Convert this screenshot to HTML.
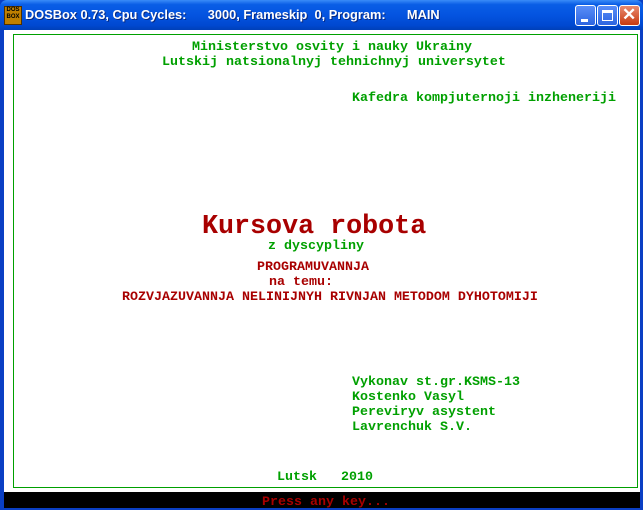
<!DOCTYPE html>
<html><head><style>
*{margin:0;padding:0}
body{width:643px;height:510px;overflow:hidden;background:#0a3fc4;position:relative;font-family:"Liberation Mono",monospace}
#tb{position:absolute;left:0;top:0;width:643px;height:30px;background:linear-gradient(#3a8cf8 0%,#0a5ee6 15%,#0454e0 50%,#0048d0 85%,#0040b8 100%);border-radius:7px 7px 0 0}
#ttl{position:absolute;left:25px;top:7px;color:#fff;font-family:"Liberation Sans",sans-serif;font-size:12.8px;font-weight:bold;text-shadow:1px 1px #0a2a80;white-space:pre}
#ico{position:absolute;left:4px;top:6px;width:16px;height:17px;background:#c08000;border:1px solid #503000;color:#000;font:bold 6px/7px "Liberation Sans";text-align:center}
.btn{position:absolute;top:5px;width:21px;height:21px;border:1px solid #fff;border-radius:3px;background:linear-gradient(#5a8ef8,#2c64e0);box-sizing:border-box}
#cl{background:linear-gradient(#e88a70,#c83a10)}
#client{position:absolute;left:4px;top:30px;width:636px;height:462px;background:#fff}
#frame{position:absolute;left:13px;top:34px;width:623px;height:452px;border:1px solid #00a000}
#bar{position:absolute;left:4px;top:492px;width:636px;height:16px;background:#000}
.t{position:absolute;font-size:13.33px;font-weight:bold;line-height:14px;white-space:pre;color:#00a000}
.r{color:#a80000}
</style></head><body>
<div id="tb">
<div id="ico">DOS<br>BOX</div>
<div id="ttl">DOSBox 0.73, Cpu Cycles:      3000, Frameskip  0, Program:      MAIN</div>
<div class="btn" style="left:575px"><div style="position:absolute;left:5px;top:13px;width:7px;height:3px;background:#fff"></div></div>
<div class="btn" style="left:597px"><div style="position:absolute;left:4px;top:4px;width:11px;height:11px;border:1px solid #fff;border-top-width:3px;box-sizing:border-box"></div></div>
<div class="btn" id="cl" style="left:619px"><div style="position:absolute;left:2px;top:-1px;color:#fff;font:bold 17px 'Liberation Sans'">✕</div></div>
</div>
<div id="client"></div>
<div id="frame"></div>
<div id="bar"></div>
<div class="t" style="left:192px;top:41px">Ministerstvo osvity i nauky Ukrainy</div>
<div class="t" style="left:162px;top:56px">Lutskij natsionalnyj tehnichnyj universytet</div>
<div class="t" style="left:352px;top:92px">Kafedra kompjuternoji inzheneriji</div>
<div class="t r" style="left:202px;top:213px;font-size:26.7px;line-height:28px">Kursova robota</div>
<div class="t" style="left:268px;top:240px">z dyscypliny</div>
<div class="t r" style="left:257px;top:261px">PROGRAMUVANNJA</div>
<div class="t r" style="left:269px;top:276px">na temu:</div>
<div class="t r" style="left:122px;top:291px">ROZVJAZUVANNJA NELINIJNYH RIVNJAN METODOM DYHOTOMIJI</div>
<div class="t" style="left:352px;top:376px">Vykonav st.gr.KSMS-13</div>
<div class="t" style="left:352px;top:391px">Kostenko Vasyl</div>
<div class="t" style="left:352px;top:406px">Pereviryv asystent</div>
<div class="t" style="left:352px;top:421px">Lavrenchuk S.V.</div>
<div class="t" style="left:277px;top:471px">Lutsk   2010</div>
<div class="t r" style="left:262px;top:496px">Press any key...</div>
</body></html>
